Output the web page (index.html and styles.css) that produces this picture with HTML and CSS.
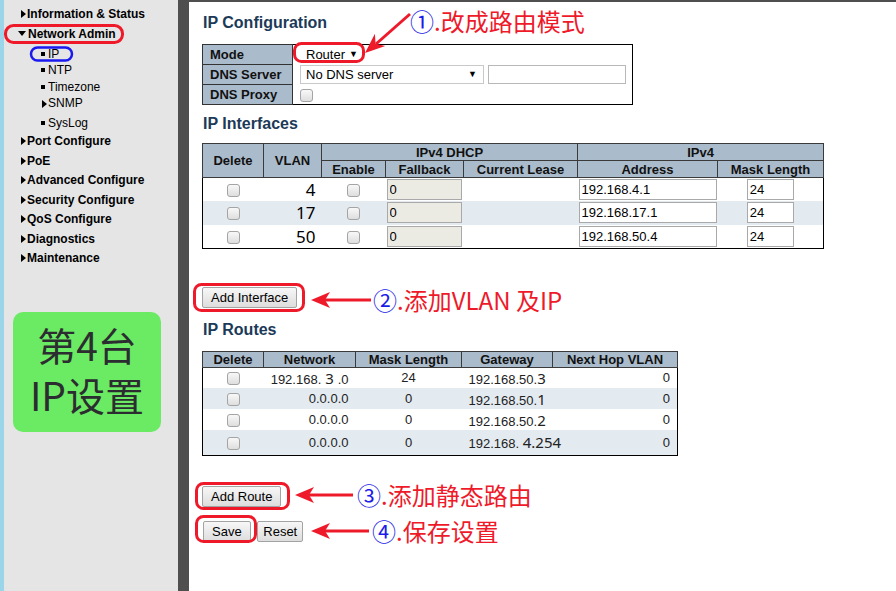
FILE: index.html
```html
<!DOCTYPE html>
<html lang="zh">
<head>
  <meta charset="UTF-8" />
  <meta name="viewport" content="width=device-width, initial-scale=1.0" />
  <title>IP Configuration</title>
  <link rel="stylesheet" href="styles.css">
</head>
<body>
  <div class="side">
    <ul class="menu">
      <li><div class="item">Information &amp; Status</div></li>
      <li>
        <div class="item open">Network Admin</div>
        <ul class="sub">
          <li class="dot">IP</li>
          <li class="dot">NTP</li>
          <li class="dot">Timezone</li>
          <li class="arrow">SNMP</li>
          <li class="dot">SysLog</li>
        </ul>
      </li>
      <li><div class="item">Port Configure</div></li>
      <li><div class="item">PoE</div></li>
      <li><div class="item">Advanced Configure</div></li>
      <li><div class="item">Security Configure</div></li>
      <li><div class="item">QoS Configure</div></li>
      <li><div class="item">Diagnostics</div></li>
      <li><div class="item">Maintenance</div></li>
    </ul>
    <div class="tag">第4台<br />IP设置</div>
  </div>
  <div class="divider"></div>

  <div class="main">
    <h2 class="top">IP Configuration</h2>
    <table class="cfg">
      <tr>
        <th>Mode</th>
        <td><span class="sel plain"><select><option>Router</option></select></span></td>
      </tr>
      <tr>
        <th>DNS Server</th>
        <td><span class="sel wide"><select><option>No DNS server</option></select></span><input type="text" class="dns" /></td>
      </tr>
      <tr>
        <th>DNS Proxy</th>
        <td><input type="checkbox" class="proxy" /></td>
      </tr>
    </table>

    <h2>IP Interfaces</h2>
    <table class="grid ifs">
      <colgroup>
        <col style="width:61px"><col style="width:58px"><col style="width:64px"><col style="width:78px">
        <col style="width:114px"><col style="width:140px"><col style="width:106px">
      </colgroup>
      <thead>
        <tr class="h1">
          <th rowspan="2">Delete</th>
          <th rowspan="2">VLAN</th>
          <th colspan="3">IPv4 DHCP</th>
          <th colspan="2">IPv4</th>
        </tr>
        <tr class="h2">
          <th>Enable</th>
          <th>Fallback</th>
          <th>Current Lease</th>
          <th>Address</th>
          <th>Mask Length</th>
        </tr>
      </thead>
      <tbody>
        <tr>
          <td class="c"><input type="checkbox" /></td>
          <td class="vlan">4</td>
          <td class="c"><input type="checkbox" /></td>
          <td><input type="text" class="fb" value="0" disabled /></td>
          <td></td>
          <td><input type="text" class="addr" value="192.168.4.1" /></td>
          <td class="c"><input type="text" class="mask" value="24" /></td>
        </tr>
        <tr class="alt">
          <td class="c"><input type="checkbox" /></td>
          <td class="vlan">17</td>
          <td class="c"><input type="checkbox" /></td>
          <td><input type="text" class="fb" value="0" disabled /></td>
          <td></td>
          <td><input type="text" class="addr" value="192.168.17.1" /></td>
          <td class="c"><input type="text" class="mask" value="24" /></td>
        </tr>
        <tr>
          <td class="c"><input type="checkbox" /></td>
          <td class="vlan">50</td>
          <td class="c"><input type="checkbox" /></td>
          <td><input type="text" class="fb" value="0" disabled /></td>
          <td></td>
          <td><input type="text" class="addr" value="192.168.50.4" /></td>
          <td class="c"><input type="text" class="mask" value="24" /></td>
        </tr>
      </tbody>
    </table>

    <div class="actions first"><button class="btn">Add Interface</button></div>

    <h2 class="routes-title">IP Routes</h2>
    <table class="grid routes">
      <colgroup>
        <col style="width:61px"><col style="width:92px"><col style="width:106px"><col style="width:91px"><col style="width:125px">
      </colgroup>
      <thead>
        <tr>
          <th>Delete</th>
          <th>Network</th>
          <th>Mask Length</th>
          <th>Gateway</th>
          <th>Next Hop VLAN</th>
        </tr>
      </thead>
      <tbody>
        <tr>
          <td class="c"><input type="checkbox" /></td>
          <td class="r">192.168.<span class="ed"> 3 </span>.0</td>
          <td class="c">24</td>
          <td class="l">192.168.50.<span class="ed">3</span></td>
          <td class="r">0</td>
        </tr>
        <tr class="alt">
          <td class="c"><input type="checkbox" /></td>
          <td class="r">0.0.0.0</td>
          <td class="c">0</td>
          <td class="l">192.168.50.<span class="ed">1</span></td>
          <td class="r">0</td>
        </tr>
        <tr>
          <td class="c"><input type="checkbox" /></td>
          <td class="r">0.0.0.0</td>
          <td class="c">0</td>
          <td class="l">192.168.50.<span class="ed">2</span></td>
          <td class="r">0</td>
        </tr>
        <tr class="alt last">
          <td class="c"><input type="checkbox" /></td>
          <td class="r">0.0.0.0</td>
          <td class="c">0</td>
          <td class="l">192.168. <span class="ed">4.254</span></td>
          <td class="r">0</td>
        </tr>
      </tbody>
    </table>

    <div class="actions second"><button class="btn">Add Route</button></div>
    <div class="actions third">
      <button class="btn save">Save</button>
      <button class="btn reset">Reset</button>
    </div>
  </div>

  <!-- annotations drawn over the screenshot -->
  <svg class="marks" width="896" height="591" viewBox="0 0 896 591">
    <g fill="none" stroke="#ee1a2a" stroke-width="3">
      <rect x="5.5" y="25.5" width="117" height="17" rx="8" />
      <rect x="294.5" y="43.5" width="69" height="18" rx="7" />
      <rect x="194.5" y="284.5" width="109" height="26" rx="7" />
      <rect x="196.5" y="483.5" width="92" height="25" rx="7" />
      <rect x="196.5" y="516.5" width="59" height="25" rx="7" />
      <line x1="410" y1="14" x2="376" y2="44" />
      <line x1="325" y1="300" x2="371" y2="300" />
      <line x1="309" y1="495" x2="353" y2="495" />
      <line x1="325" y1="531" x2="369" y2="531" />
    </g>
    <rect x="31" y="47.5" width="41" height="13" rx="6.5" fill="none" stroke="#1a1af0" stroke-width="2.5" />
    <g fill="#ee1a2a">
      <polygon points="365,53 374.9,33.8 375.6,43.8 385.3,46" />
      <polygon points="311,300 330,292 325,300 330,308" />
      <polygon points="295,495 314,487 309,495 314,503" />
      <polygon points="311,531 330,523 325,531 330,539" />
    </g>
  </svg>

  <div class="note n1"><span class="num">①</span>.改成路由模式</div>
  <div class="note n2"><span class="num">②</span>.添加VLAN 及IP</div>
  <div class="note n3"><span class="num">③</span>.添加静态路由</div>
  <div class="note n4"><span class="num">④</span>.保存设置</div>
</body>
</html>
```

FILE: styles.css
```css
html, body { margin: 0; height: 100%; }
body {
  position: relative; display: flex; height: 591px; overflow: hidden;
  font-family: "Liberation Sans", Arial, sans-serif; font-size: 13px; color: #000;
}

/* left menu */
.side { width: 174px; flex: none; background: #e5e5e5; border-left: 4px solid #9bd5ea; }
.menu, .sub { list-style: none; margin: 0; padding: 0; }
.menu { padding-top: 5px; font-size: 12px; font-weight: bold; }
.item { height: 19.5px; line-height: 19.5px; padding-left: 17px; white-space: nowrap; }
.item::before {
  content: ""; display: inline-block; vertical-align: 0;
  border-left: 5px solid #000; border-top: 4px solid transparent; border-bottom: 4px solid transparent;
  margin-right: 1px;
}
.item.open { padding-left: 14px; }
.item.open::before {
  border-top: 5px solid #000; border-left: 4px solid transparent; border-right: 4px solid transparent;
  border-bottom: 0; margin-right: 2px; vertical-align: 2px;
}
.sub { padding: 1.5px 0 1px; font-weight: normal; }
.sub li { height: 16.5px; line-height: 16.5px; padding-left: 37px; }
.sub li.dot::before {
  content: ""; display: inline-block; width: 4px; height: 4px; background: #000;
  margin-right: 3px; vertical-align: 2px;
}
.sub li.arrow { padding-left: 38px; margin-bottom: 3px; }
.sub li.arrow::before {
  content: ""; display: inline-block; vertical-align: -1px;
  border-left: 5px solid #000; border-top: 4px solid transparent; border-bottom: 4px solid transparent;
  margin-right: 1px;
}
.tag {
  width: 148px; height: 120px; margin: 43px 0 0 9px; box-sizing: border-box; padding-top: 7px;
  background: #6bea63; border-radius: 10px; text-align: center;
  font-family: "Noto Sans CJK SC", sans-serif; font-size: 39px; line-height: 50px; color: #2c2d30;
}
.divider { width: 11px; flex: none; background: #4f4f4f; }

/* main page */
.main { flex: 1; background: #fff; border-top: 2px solid #4f4f4f; padding-left: 13px; }
h2 { font-size: 16px; line-height: 20px; margin: 9px 0 9px 1px; color: #1c3a58; }
h2.top { margin: 11px 0 11px 1px; }
h2.routes-title { margin: 12px 0 11px 1px; }
table { border-collapse: collapse; border: 1px solid #000; }
th { background: #aabbcb; color: #111; font-weight: bold; }

.cfg { width: 431px; }
.cfg tr { height: 20px; }
.cfg th { width: 75px; text-align: left; padding: 0 7px; border: 1px solid #333; white-space: nowrap; }
.cfg td { padding: 0 0 0 7px; }

.sel { position: relative; display: inline-block; vertical-align: middle; }
.sel select {
  appearance: none; -webkit-appearance: none; font: 13px "Liberation Sans", Arial, sans-serif; color: #000;
  height: 19px; padding: 0 20px 0 5px; border: 1px solid #c9c9c9; background: #fff; border-radius: 0;
}
.sel::after { content: "▼"; position: absolute; right: 7px; top: 4px; font-size: 9px; pointer-events: none; }
.sel.plain select { border-color: transparent; width: 66px; padding-right: 4px; }
.sel.plain::after { right: 8px; }
.sel.wide select { width: 184px; }
.dns {
  width: 138px; height: 19px; box-sizing: border-box; margin-left: 4px; vertical-align: middle;
  border: 1px solid #b8b8b8;
}

input[type="checkbox"] {
  appearance: none; -webkit-appearance: none; width: 13px; height: 13px; margin: 0; vertical-align: middle;
  border: 1px solid #a4a4a4; border-radius: 3px; background: linear-gradient(#f8f8f8, #dedede);
}
.proxy { margin-left: -3px; }

.grid { table-layout: fixed; }
.grid th { border: 1px solid #3a3a3a; padding: 0; white-space: nowrap; }
.grid td { padding: 0; white-space: nowrap; }
.grid tr.alt td { background: #e3eaf0; }
.c { text-align: center; }
.r { text-align: right; padding-right: 7px !important; }
.l { text-align: left; padding-left: 7px !important; }

.ifs { width: 621px; }
.ifs .h1 { height: 17px; }
.ifs .h2 { height: 17px; }
.ifs tbody tr { height: 23.5px; }
.vlan { text-align: right; padding-right: 6px !important; font-family: "Noto Sans", sans-serif; font-size: 17px; }
.ifs input[type="text"] {
  height: 21px; box-sizing: border-box; font: 13px "Liberation Sans", Arial, sans-serif;
  padding: 0 2px; border: 1px solid #a9a9a9; vertical-align: middle; color: #000;
}
.ifs .fb { width: 75px; margin-left: 1px; background: #ebebe4; color: #8a8a8a; border-color: #b9b9b9; }
.ifs .addr { width: 138px; margin-left: 1px; }
.ifs .mask { width: 47px; }

.routes { width: 475px; }
.routes thead tr { height: 16px; }
.routes tbody tr { height: 21px; }
.routes tbody tr.last { height: 25px; }
.routes td { color: #222; }
.ed { font-family: "Noto Sans", sans-serif; font-size: 15px; }

.actions .btn {
  font: 13px "Liberation Sans", Arial, sans-serif; color: #000; height: 21px; padding: 0 8px; margin: 0;
  background: linear-gradient(#f7f7f7, #dddddd); border: 1px solid #a3a3a3; border-radius: 2px;
}
.actions.first { margin-top: 38px; }
.actions.second { margin-top: 30px; }
.actions.third { margin-top: 14px; }
.btn.save { margin-left: 1px; }
.btn.reset { padding: 0 5px; margin-left: 3px; }

/* annotation layer */
.marks { position: absolute; left: 0; top: 0; pointer-events: none; }
.note {
  position: absolute; font-family: "Noto Sans CJK SC", sans-serif; font-size: 24px; line-height: 24px;
  color: #ee1a2a; white-space: nowrap;
}
.note .num { color: #1c1ce8; }
.n1 { left: 410px; top: 9px; }
.n2 { left: 373px; top: 288px; }
.n3 { left: 357px; top: 483px; }
.n4 { left: 372px; top: 519px; }
```
